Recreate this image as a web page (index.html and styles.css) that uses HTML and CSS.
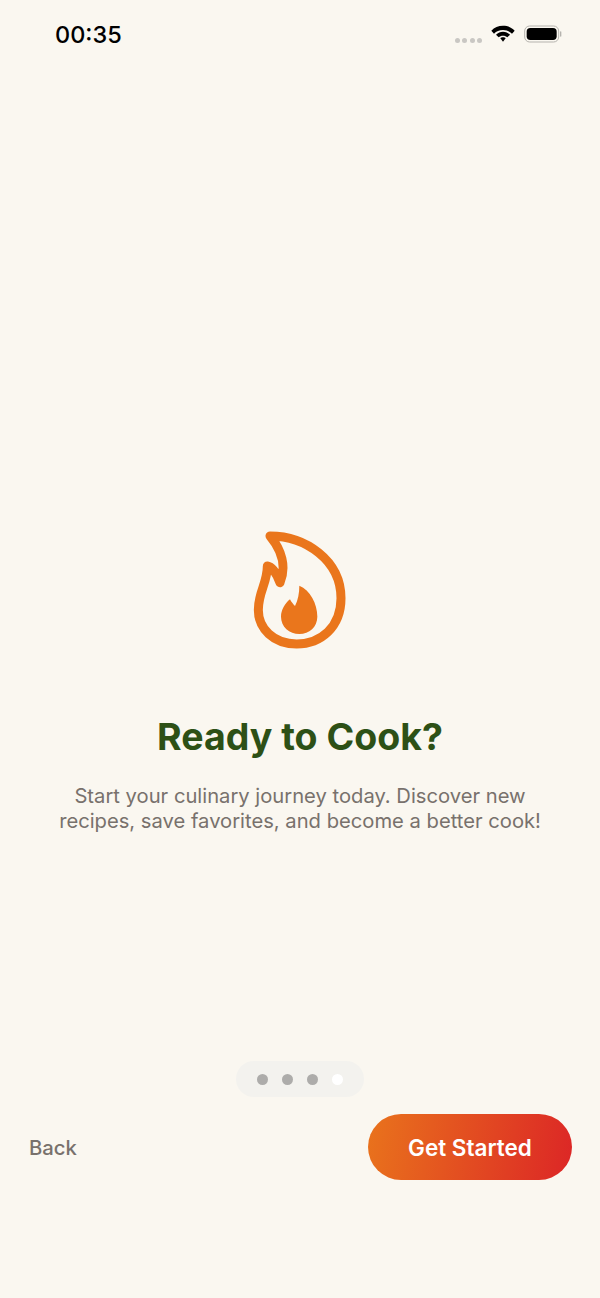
FILE: index.html
```html
<!DOCTYPE html>
<html lang="en">
<head>
    <meta charset="UTF-8">
    <meta name="viewport" content="width=device-width, initial-scale=1.0">
    <title>Ready to Cook?</title>
    <link rel="stylesheet" href="styles.css">
</head>
<body>

<div class="screen">
    <div class="status-bar">
        <span class="time">00:35</span>
        <div class="status-icons">
            <div class="signal">
                <span></span><span></span><span></span><span></span>
            </div>
            <svg class="wifi" width="24" height="18" viewBox="0 0 72 54">
                <path d="M36 5C22 5 10 10 1 20l8 9c7-7 16-11 27-11s20 4 27 11l8-9C62 10 50 5 36 5z"/>
                <path d="M36 23c-8 0-15 3-21 9l8 8c3-3 8-5 13-5s10 2 13 5l8-8c-6-6-13-9-21-9z"/>
                <path d="M36 40c-4 0-6 1-8 3l8 10 8-10c-2-2-4-3-8-3z"/>
            </svg>
            <svg class="battery" width="38" height="18" viewBox="0 0 114 54">
                <rect x="2" y="3" width="102" height="48" rx="15" fill="none" stroke="#b5b3ae" stroke-width="3"/>
                <rect x="8" y="9" width="90" height="36" rx="11" fill="#000"/>
                <rect x="108" y="19" width="4" height="16" rx="2" fill="#b5b3ae"/>
            </svg>
        </div>
    </div>

    <div class="content">
        <svg class="flame" width="140" height="140" viewBox="0 0 420 420">
            <path class="flame-outline" d="M120 48C225 48 333 120 333 235C333 322 272 372 200 372C130 372 85 325 85 270C85 215 112 190 112 138C125 140 140 160 150 188C170 140 155 90 120 48Z"/>
            <path class="flame-inner" d="M208 197C240 210 262 250 262 290C262 320 238 342 208 342C178 342 153 320 153 290C153 270 165 250 180 238C184 246 189 252 195 258C204 240 208 220 208 197Z"/>
        </svg>
        <h1>Ready to Cook?</h1>
        <p>Start your culinary journey today. Discover new recipes, save favorites, and become a better cook!</p>
    </div>

    <div class="pager">
        <span class="dot"></span>
        <span class="dot"></span>
        <span class="dot"></span>
        <span class="dot active"></span>
    </div>

    <div class="nav">
        <span class="back">Back</span>
        <span class="next">Get Started</span>
    </div>
</div>

</body>
</html>
```

FILE: styles.css
```css
body {
    margin: 0;
    background: #faf7f0;
    font-family: Inter, "Liberation Sans", sans-serif;
}
.screen {
    height: 1298px;
    display: flex;
    flex-direction: column;
    overflow: hidden;
}
.status-bar {
    height: 68px;
    padding: 0 38px 0 55px;
    display: flex;
    justify-content: space-between;
    align-items: center;
}
.time {
    font-size: 23.5px;
    font-weight: 500;
    line-height: 30px;
    padding-top: 2px;
    color: #000;
}
.status-icons {
    display: flex;
    align-items: center;
}
.signal {
    display: flex;
    gap: 2.3px;
    margin-top: 12px;
    margin-right: 9px;
}
.signal span {
    width: 5px;
    height: 5px;
    border-radius: 50%;
    background: #c9c7c3;
}
.wifi {
    margin-right: 9px;
    margin-top: -3px;
}
.content {
    height: 993px;
    box-sizing: border-box;
    padding: 452px 40px 0;
    text-align: center;
}
.flame {
    display: block;
    margin: 0 auto;
}
.flame-outline {
    fill: none;
    stroke: #ea761c;
    stroke-width: 27;
    stroke-linejoin: round;
}
.flame-inner {
    fill: #ea761c;
}
h1 {
    margin: 55px 0 0;
    font-size: 37.5px;
    line-height: 44px;
    font-weight: 700;
    color: #2d5016;
}
p {
    margin: 24px 0 0;
    font-size: 20.2px;
    line-height: 25px;
    color: #78716c;
}
.pager {
    align-self: center;
    display: flex;
    align-items: center;
    gap: 14px;
    height: 36px;
    padding: 0 21px;
    border-radius: 18px;
    background: #f3f2ee;
}
.dot {
    width: 11px;
    height: 11px;
    border-radius: 50%;
    background: #adacaa;
}
.dot.active {
    background: #fff;
}
.nav {
    margin-top: 17px;
    padding: 0 28px 0 29px;
    display: flex;
    justify-content: space-between;
    align-items: center;
}
.back {
    font-size: 20.3px;
    font-weight: 500;
    color: #78716c;
}
.next {
    width: 204px;
    height: 66px;
    border-radius: 33px;
    background: linear-gradient(100deg, #e9731c, #dc2626);
    color: #fff;
    font-size: 22.5px;
    font-weight: 600;
    display: flex;
    align-items: center;
    justify-content: center;
}
```
